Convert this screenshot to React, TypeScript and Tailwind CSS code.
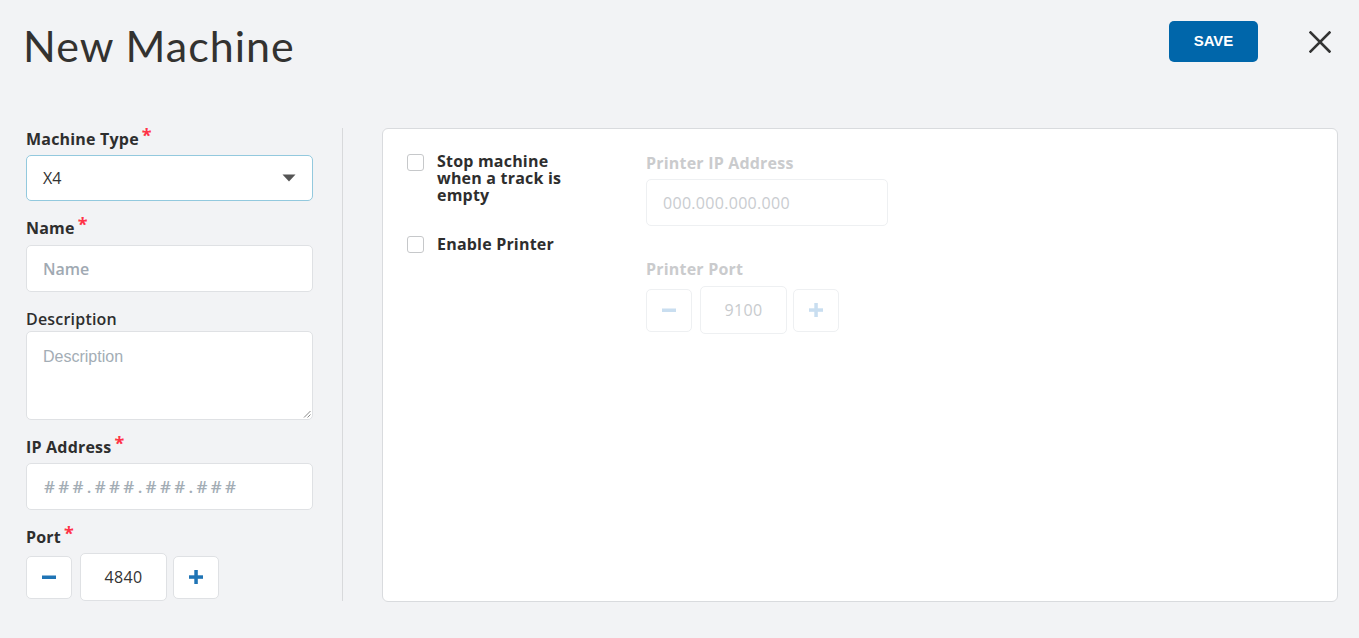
import React from "react";

const Star = () => (
  <span className="text-[#ff3347] text-[18px] font-bold leading-none relative -top-[3px] ml-[3px]">*</span>
);

function Stepper({ value, disabled }: { value: string; disabled?: boolean }) {
  const border = disabled ? "border-[#eef0f2]" : "border-[#dfe1e4]";
  const icon = disabled ? "#c9def0" : "#1f74b5";
  return (
    <div className="flex items-center">
      <div className={`w-[46px] h-[43px] bg-white border ${border} rounded-[5px] flex items-center justify-center`}>
        <svg width="16" height="16" viewBox="0 0 16 16"><rect x="1" y="6.5" width="14" height="3.5" fill={icon} /></svg>
      </div>
      <div className={`ml-[8px] w-[87px] h-[48px] bg-white border ${border} rounded-[5px] flex items-center justify-center text-[16px] tracking-[0.3px] ${disabled ? "text-[#c8cbce]" : "text-[#333]"}`}>
        {value}
      </div>
      <div className={`ml-[6px] w-[46px] h-[43px] bg-white border ${border} rounded-[5px] flex items-center justify-center`}>
        <svg width="16" height="16" viewBox="0 0 16 16"><rect x="1" y="6.3" width="14" height="3.5" fill={icon} /><rect x="6.3" y="1" width="3.5" height="14" fill={icon} /></svg>
      </div>
    </div>
  );
}

export default function App() {
  const font = "font-['Open_Sans','Noto_Sans',sans-serif]";
  const lbl = "h-[20px] text-[16px] font-bold leading-[20px] tracking-[0.2px] flex items-start";
  return (
    <div className={`w-full min-h-screen h-[638px] bg-[#f2f3f5] text-[#2e2e2e] ${font}`}>
      <div className="flex items-start justify-between pl-[23px] pr-[28px] pt-[18px] h-[128px]">
        <h1 className="text-[43px] leading-[56px] font-normal tracking-[1px] text-[#333230] font-['Lato',sans-serif]">New Machine</h1>
        <div className="flex items-center mt-[3px]">
          <button className="w-[89px] h-[41px] rounded-[5px] bg-[#0066aa] text-white font-bold text-[15px] font-['Liberation_Sans',sans-serif]">SAVE</button>
          <button className="ml-[51px] w-[22px] h-[22px] flex items-center justify-center">
            <svg width="22" height="22" viewBox="0 0 22 22"><path d="M1.5 1.5 L20.5 20.5 M20.5 1.5 L1.5 20.5" stroke="#333" strokeWidth="2.6" strokeLinecap="square" /></svg>
          </button>
        </div>
      </div>
      <div className="flex">
        <div className="ml-[26px] w-[287px] pt-[1px] flex flex-col">
          <label className={lbl}>Machine Type<Star /></label>
          <div className="mt-[6px] h-[46px] bg-white border border-[#93c9de] rounded-[5px] flex items-center justify-between pl-[16px] pr-[16px]">
            <span className="text-[16px] text-[#333]">X4</span>
            <svg width="14" height="8" viewBox="0 0 14 8"><path d="M0.5 0.5 H13.5 L7 7.5 Z" fill="#555" /></svg>
          </div>
          <label className={`mt-[17px] ${lbl}`}>Name<Star /></label>
          <div className="mt-[7px] h-[47px] bg-white border border-[#dfe1e4] rounded-[5px] flex items-center pl-[16px]">
            <span className="text-[16px] font-semibold text-[#9fa9b2]">Name</span>
          </div>
          <label className="mt-[17px] h-[20px] text-[16px] font-semibold leading-[20px] tracking-[0.2px]">Description</label>
          <div className="mt-[2px] h-[89px] bg-white border border-[#dfe1e4] rounded-[5px] pl-[16px] pt-[12px] relative">
            <span className="text-[16px] text-[#a3adb5] font-['Liberation_Sans',sans-serif]">Description</span>
            <svg className="absolute right-[1px] bottom-[1px]" width="8" height="8" viewBox="0 0 8 8"><path d="M7.5 1 L1 7.5 M7.5 4.5 L4.5 7.5" stroke="#888" strokeWidth="1" /></svg>
          </div>
          <label className={`mt-[17px] ${lbl}`}>IP Address<Star /></label>
          <div className="mt-[6px] h-[47px] bg-white border border-[#dfe1e4] rounded-[5px] flex items-center pl-[17px]">
            <span className="text-[17px] font-semibold tracking-[3.3px] text-[#a3adb5]">###.###.###.###</span>
          </div>
          <label className={`mt-[17px] ${lbl}`}>Port<Star /></label>
          <div className="mt-[6px]">
            <Stepper value="4840" />
          </div>
        </div>
        <div className="ml-[29px] w-px h-[473px] bg-[#d8d9db]" />
        <div className="ml-[39px] w-[956px] h-[474px] bg-white border border-[#d9dbde] rounded-[6px] flex pl-[24px] pt-[24px]">
          <div className="w-[239px] flex flex-col">
            <div className="flex items-start">
              <div className="w-[17px] h-[17px] border border-[#c6c8ca] rounded-[3px] bg-white mt-[1px]" />
              <span className="ml-[13px] w-[135px] text-[16px] font-bold leading-[17px] tracking-[0.2px]">Stop machine when a track is empty</span>
            </div>
            <div className="flex items-center mt-[32px]">
              <div className="w-[17px] h-[17px] border border-[#c6c8ca] rounded-[3px] bg-white" />
              <span className="ml-[13px] text-[16px] font-bold leading-[17px] tracking-[0.2px]">Enable Printer</span>
            </div>
          </div>
          <div className="flex flex-col">
            <label className="h-[20px] text-[16px] font-bold leading-[20px] tracking-[0.2px] text-[#cacbcd]">Printer IP Address</label>
            <div className="mt-[6px] w-[242px] h-[47px] bg-white border border-[#eef0f2] rounded-[5px] flex items-center pl-[16px]">
              <span className="text-[16px] text-[#c9ccd0] tracking-[0.3px]">000.000.000.000</span>
            </div>
            <label className="mt-[33px] h-[20px] text-[16px] font-bold leading-[20px] tracking-[0.2px] text-[#cacbcd]">Printer Port</label>
            <div className="mt-[7px]">
              <Stepper value="9100" disabled />
            </div>
          </div>
        </div>
      </div>
    </div>
  );
}
